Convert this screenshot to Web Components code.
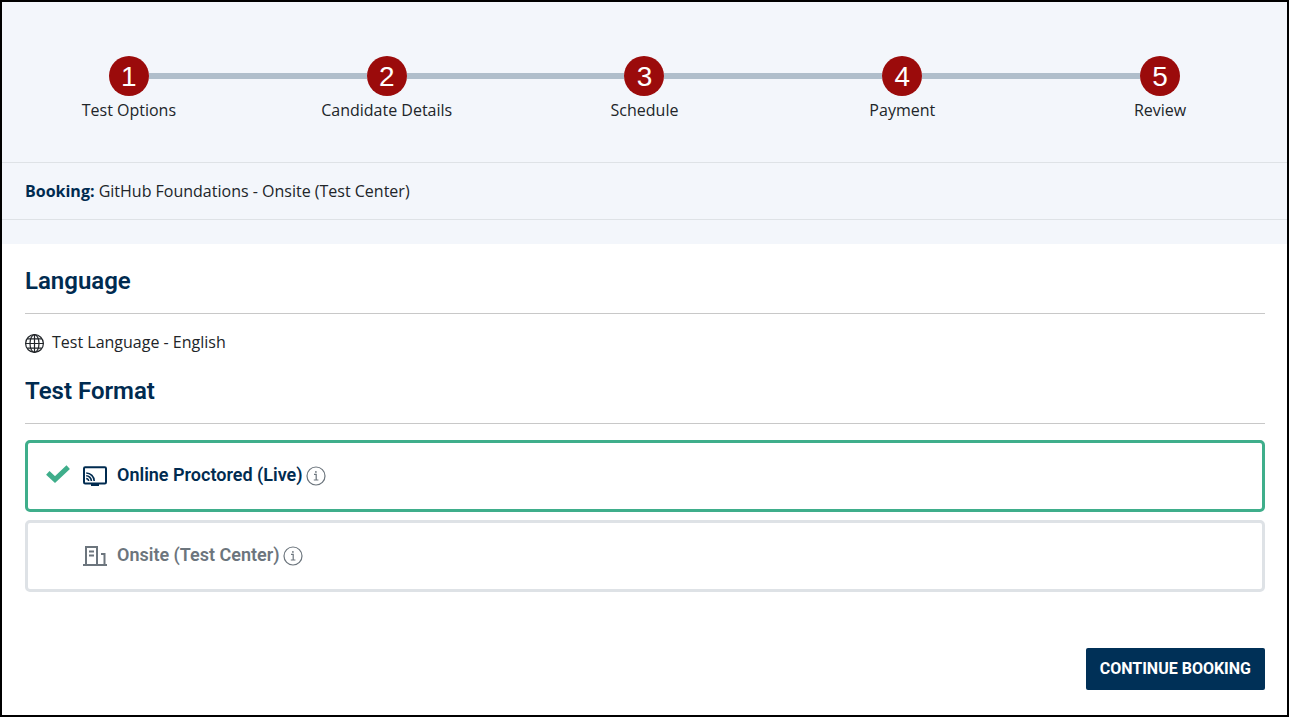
<!DOCTYPE html>
<html lang="en">
<head>
<meta charset="utf-8">
<meta name="viewport" content="width=device-width, initial-scale=1">
<title>Booking - Test Options</title>
<style>
html { height: 100%; }
body { margin: 0; min-height: 100%; display: flex; box-sizing: border-box; border: 2px solid #000; background: #fff; font: 16px/24px "Open Sans", sans-serif; color: #212529; }
booking-page { flex: 1; }
</style>
</head>
<body>
<booking-page>
  <progress-steps slot="header">
    <progress-step number="1">Test Options</progress-step>
    <progress-step number="2">Candidate Details</progress-step>
    <progress-step number="3">Schedule</progress-step>
    <progress-step number="4">Payment</progress-step>
    <progress-step number="5">Review</progress-step>
  </progress-steps>
  <booking-summary slot="header">GitHub Foundations - Onsite (Test Center)</booking-summary>
  <page-section heading="Language"><test-language>Test Language - English</test-language></page-section>
  <page-section heading="Test Format"><format-picker></format-picker></page-section>
  <continue-button slot="actions">Continue Booking</continue-button>
</booking-page>
<script>
function define(name, html, setup) {
  const template = document.createElement('template');
  template.innerHTML = html;
  customElements.define(name, class extends HTMLElement {
    constructor() {
      super();
      this.attachShadow({ mode: 'open' }).append(template.content.cloneNode(true));
    }
    connectedCallback() { if (setup) setup(this, this.shadowRoot); }
  });
}

define('booking-page', `
<style>
:host { display: block; }
header { background: #f3f6fb; padding-bottom: 24px; }
main { padding: 21px 22px 25px 23px; display: grid; gap: 21px; }
footer { display: flex; justify-content: flex-end; margin-top: 35px; }
</style>
<header><slot name="header"></slot></header>
<main><slot></slot><footer><slot name="actions"></slot></footer></main>`);

define('progress-steps', `
<style>
:host { display: grid; grid-auto-flow: column; grid-auto-columns: 1fr; padding: 54px 0 40px; border-bottom: 1px solid #dee2e6; margin: 0 -2px; }
</style>
<slot></slot>`);

define('progress-step', `
<style>
:host { display: grid; justify-items: center; row-gap: 2px; }
.track { width: 100%; display: grid; grid-template-columns: 1fr 40px 1fr; align-items: center; }
.track::before, .track::after { content: ""; height: 6px; background: #b0becb; }
:host(:first-child) .track::before, :host(:last-child) .track::after { background: none; }
.badge { width: 40px; height: 40px; border-radius: 50%; background: #9b0b0b; color: #fff; font: 28px/42px "Liberation Sans", Arial, sans-serif; text-align: center; }
</style>
<div class="track"><span class="badge"></span></div>
<span><slot></slot></span>`, (el, root) => {
  root.querySelector('.badge').textContent = el.getAttribute('number');
});

define('booking-summary', `
<style>
:host { display: block; padding: 16px 23px; border-bottom: 1px solid #dee2e6; }
b { color: #002b50; }
</style>
<b>Booking:</b> <slot></slot>`);

define('page-section', `
<style>
:host { display: block; }
h2 { margin: 0 0 16px; padding-bottom: 16px; border-bottom: 1px solid #c8c8c8; font: 600 24px/32px Roboto, sans-serif; color: #002b50; }
</style>
<section><h2></h2><slot></slot></section>`, (el, root) => {
  root.querySelector('h2').textContent = el.getAttribute('heading');
});

define('test-language', `
<style>
:host { display: flex; align-items: center; gap: 8px; }
svg { width: 19px; height: 19px; margin-top: 3px; }
</style>
<svg viewBox="0 0 19 19" fill="none" stroke="#212529" stroke-width="1.2" aria-hidden="true"><circle cx="9.5" cy="9.5" r="8.9"/><ellipse cx="9.5" cy="9.5" rx="4.5" ry="8.9"/><path d="M9.5.6v17.8M.6 9.5h17.8M2.2 4.8h14.6M2.2 14.2h14.6"/></svg>
<span><slot></slot></span>`);

define('info-button', `
<style>
:host { display: flex; }
button { display: flex; padding: 0; border: 0; background: none; color: #6c757d; cursor: pointer; }
svg { width: 20px; height: 20px; }
</style>
<button type="button"><svg viewBox="0 0 20 20" fill="none" stroke="currentColor" stroke-width="1.2" aria-hidden="true"><circle cx="10" cy="10" r="9"/><path d="M8 8.4h2.2v5.4M7.8 14h4.6"/><circle cx="9.9" cy="5.9" r=".9" fill="currentColor" stroke="none"/></svg></button>`, (el, root) => {
  root.querySelector('button').setAttribute('aria-label', el.getAttribute('label'));
});

define('format-picker', `
<style>
:host { display: grid; gap: 8px; }
.card { display: flex; align-items: center; gap: 3px; box-sizing: border-box; min-height: 72px; padding: 0 18px; border: 3px solid #dee2e6; border-radius: 5px; color: #6c757d; }
.card:has(:checked) { border-color: #3fae8b; color: #002b50; }
label { display: flex; align-items: center; font: 600 18px/24px Roboto, sans-serif; cursor: pointer; }
label > :last-child { padding-bottom: 2px; }
.mark { display: grid; margin-right: 13px; }
.mark > * { grid-area: 1 / 1; width: 24px; height: 24px; margin: 0; }
input { appearance: none; }
.check { visibility: hidden; pointer-events: none; }
:checked + .check { visibility: visible; }
.kind { width: 24px; height: 24px; margin-right: 10px; }
</style>
<div class="card">
  <label>
    <span class="mark"><input type="radio" name="format" value="online" checked><svg class="check" viewBox="0 0 24 24" fill="none" stroke="#3fae8b" stroke-width="5" aria-hidden="true"><path d="M1.8 8.8 9 15.5 22.2 3.2"/></svg></span>
    <svg class="kind" viewBox="0 0 24 24" aria-hidden="true"><rect x="1" y="3.2" width="22" height="16.2" rx="1.2" fill="none" stroke="currentColor" stroke-width="2"/><path d="M8 19h8v3H8z" fill="currentColor"/><path d="M3.2 14.6a2.4 2.4 0 0 1 2.4 2.4M3.2 11.8a5.2 5.2 0 0 1 5.2 5.2M3.2 9a8 8 0 0 1 8 8" fill="none" stroke="currentColor" stroke-width="1.6"/></svg>
    <span>Online Proctored (Live)</span>
  </label>
  <info-button label="About Online Proctored (Live)"></info-button>
</div>
<div class="card">
  <label>
    <span class="mark"><input type="radio" name="format" value="onsite"><svg class="check" viewBox="0 0 24 24" fill="none" stroke="#3fae8b" stroke-width="5" aria-hidden="true"><path d="M1.8 8.8 9 15.5 22.2 3.2"/></svg></span>
    <svg class="kind" viewBox="0 0 24 24" fill="none" stroke="currentColor" stroke-width="2" aria-hidden="true"><path d="M0 21h24M3 21V3h11v18M18 10h3.5v11M6 7.5h5M6 11.5h5"/></svg>
    <span>Onsite (Test Center)</span>
  </label>
  <info-button label="About Onsite (Test Center)"></info-button>
</div>`);

define('continue-button', `
<style>
:host { display: block; }
button { border: 0; border-radius: 2px; padding: 9px 14px; background: #003057; color: #fff; font: 700 16px/24px Roboto, sans-serif; text-transform: uppercase; cursor: pointer; display: block; }
</style>
<button type="button"><slot></slot></button>`);
</script>
</body>
</html>
